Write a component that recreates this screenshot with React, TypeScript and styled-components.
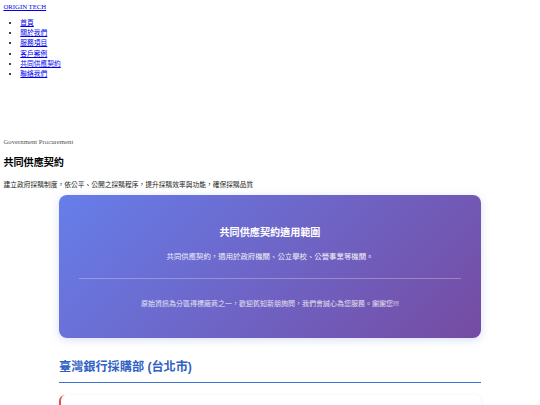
import styled, { createGlobalStyle } from "styled-components";

const GlobalStyle = createGlobalStyle`
    body {
        margin: 3.4px;
        font-family: "Liberation Serif", "Noto Sans CJK TC", serif;
        font-size: 6.75px;
        color: #000;
        background: #fff;
    }
`;

const Logo = styled.div`
    line-height: 7.8px;
    a {
        color: #0000ee;
    }
`;

const NavList = styled.ul`
    margin: 6.75px 0;
    padding-left: 16.9px;

    li {
        line-height: 10.2px;
    }

    a {
        color: #0000ee;
    }
`;

const Intro = styled.section`
    padding-top: 45px;
`;

const Eyebrow = styled.p`
    margin: 6.75px 0 0;
    line-height: 7.8px;
    color: #555;
`;

const PageTitle = styled.h2`
    margin: 11px 0 8.4px;
    font-size: 10.1px;
    font-weight: bold;
    line-height: 14.7px;
`;

const PageDesc = styled.p`
    margin: 0 0 6px;
    line-height: 9.8px;
    color: #222;
`;

const Wrap = styled.div`
    max-width: 421.9px;
    margin: 0 auto;
    font-family: "Liberation Sans", "Noto Sans CJK TC", sans-serif;
`;

const ScopeCard = styled.div`
    padding: 20.25px;
    border-radius: 8px;
    background: linear-gradient(135deg, #667eea 0%, #764ba2 100%);
    box-shadow: 0 2px 8px rgba(102, 126, 234, 0.25);
    color: #fff;
    text-align: center;
`;

const ScopeTitle = styled.h3`
    margin: 10.4px 0 11.2px;
    font-size: 10.1px;
    font-weight: bold;
    line-height: 14.7px;
`;

const ScopeLead = styled.p`
    margin: 0 0 15px;
    font-size: 7.4px;
    line-height: 10.7px;
    opacity: 0.92;
`;

const Divider = styled.hr`
    margin: 0;
    border: none;
    height: 1px;
    background: rgba(255, 255, 255, 0.28);
`;

const ScopeNote = styled.p`
    margin: 20.9px 0 8.4px;
    font-size: 7px;
    line-height: 10.1px;
    opacity: 0.82;
`;

const Branch = styled.section`
    padding-top: 20.8px;
`;

const BranchTitle = styled.h3`
    margin: 0 0 12px;
    padding-bottom: 5px;
    font-size: 12.15px;
    font-weight: bold;
    line-height: 17.6px;
    color: #2f62c4;
    border-bottom: 1.3px solid #3b6fd6;
`;

const BranchCard = styled.div`
    padding: 22px 14px 14px;
    border-radius: 6px;
    border-left: 2px solid #e0505a;
    background: #fff;
    box-shadow: 0 1px 4px rgba(0, 0, 0, 0.08);
    font-size: 7px;
    line-height: 11px;
    color: #333;

    h4 {
        margin: 0 0 6px;
        font-size: 8.5px;
    }

    p {
        margin: 0;
    }
`;

const navItems = ["首頁", "關於我們", "服務項目", "客戶案例", "共同供應契約", "聯絡我們"];

function App() {
    return (
        <>
            <GlobalStyle />
            <header>
                <Logo>
                    <a href="#">ORIGIN TECH</a>
                </Logo>
                <nav>
                    <NavList>
                        {navItems.map((item) => (
                            <li key={item}>
                                <a href="#">{item}</a>
                            </li>
                        ))}
                    </NavList>
                </nav>
            </header>
            <Intro>
                <Eyebrow>Government Procurement</Eyebrow>
                <PageTitle>共同供應契約</PageTitle>
                <PageDesc>建立政府採購制度，依公平、公開之採購程序，提升採購效率與功能，確保採購品質</PageDesc>
            </Intro>
            <Wrap>
                <ScopeCard>
                    <ScopeTitle>共同供應契約適用範圍</ScopeTitle>
                    <ScopeLead>共同供應契約，適用於政府機關、公立學校、公營事業等機關。</ScopeLead>
                    <Divider />
                    <ScopeNote>原始資訊為分區得標廠商之一，歡迎舊知新朋詢問，我們會誠心為您服務。謝謝您!!!</ScopeNote>
                </ScopeCard>
                <Branch>
                    <BranchTitle>臺灣銀行採購部 (台北市)</BranchTitle>
                    <BranchCard>
                        <h4>臺灣銀行採購部</h4>
                        <p>共同供應契約</p>
                    </BranchCard>
                </Branch>
            </Wrap>
        </>
    );
}

export default App;
